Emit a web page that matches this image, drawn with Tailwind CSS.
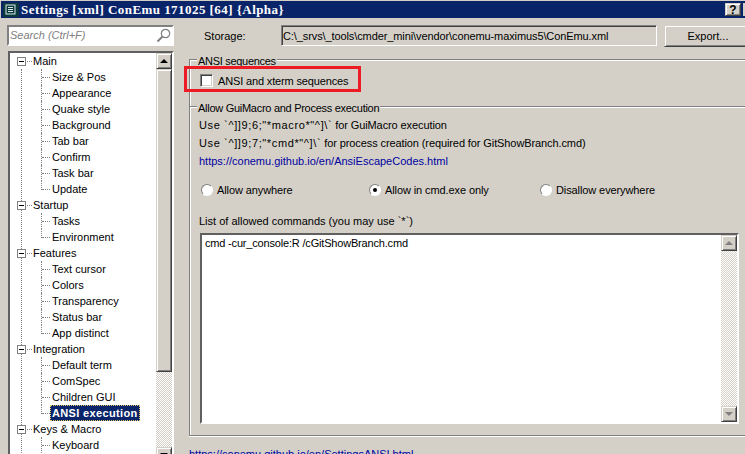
<!DOCTYPE html>
<html lang="en">
  <head>
    <meta charset="UTF-8" />
    <script src="https://cdn.jsdelivr.net/npm/@tailwindcss/browser@4"></script>
    <title>Settings</title>
  </head>
  <body class="h-[454px] w-[745px] overflow-hidden bg-[#d4d0c8] text-[11px] leading-none text-black font-['Liberation_Sans',sans-serif]">
    <!-- Title bar -->
    <div class="pl-px pt-px">
      <div class="flex h-[17px] items-center bg-[#0a246a] pl-[2px] text-white">
        <svg class="h-[14px] w-[16px] shrink-0" viewBox="0 0 16 14">
          <rect width="16" height="14" fill="#0c3a3e" />
          <rect x="3" y="2" width="9" height="9" fill="none" stroke="#d8e8e8" />
          <path d="M5 4.5h5M5 6.5h5M5 8.5h5" stroke="#d8e8e8" />
        </svg>
        <span class="ml-[2px] whitespace-nowrap font-['Liberation_Serif',serif] text-[13px] font-bold tracking-[0.45px]">Settings [xml] ConEmu 171025 [64] {Alpha}</span>
        <div class="ml-auto flex">
          <div class="flex h-[13px] w-[16px] items-center justify-center border border-[#d4d0c8] border-r-[#404040] border-b-[#404040] bg-[#d4d0c8] text-[12px] font-bold text-black shadow-[inset_1px_1px_0_#fff,inset_-1px_-1px_0_#808080]">?</div>
          <div class="ml-[2px] h-[13px] w-[2px] bg-[#d4d0c8]"></div>
        </div>
      </div>
    </div>

    <div class="flex">
      <!-- Left column -->
      <div class="w-[175px] shrink-0 pt-[7px]">
        <div class="ml-[7px] flex h-[21px] w-[167px] items-center border-2 border-[#808080] border-r-white border-b-white bg-white pl-px text-[#808080] italic">
          Search (Ctrl+F)
          <svg class="mr-px ml-auto h-[15px] w-[15px]" viewBox="0 0 15 15" fill="none" stroke="#808080">
            <circle cx="9.5" cy="5.5" r="4.2" stroke-width="1.2" />
            <path d="M6.5 8.5 1.5 13.5" stroke-width="2" />
          </svg>
        </div>

        <!-- Tree -->
        <div class="relative mt-[5px] ml-[8px] flex w-[166px] border-2 border-[#606060] border-r-white border-b-white bg-white">
          <div class="absolute top-[16px] bottom-0 left-[11px] border-l border-dotted border-[#808080]"></div>
          <div class="relative w-[147px]">
            <div class="flex h-4 items-center pl-[7px]"><span class="z-10 h-[9px] w-[9px] border border-[#808080] bg-white bg-[linear-gradient(#000,#000)] bg-[length:5px_1px] bg-center bg-no-repeat"></span><span class="ml-px w-[5px] border-t border-dotted border-[#808080]"></span><span class="ml-px">Main</span></div>
            <div class="flex h-4 items-center pl-[31px]"><span class="h-full w-[9px] border-l border-dotted border-[#808080] pt-2"><span class="block border-t border-dotted border-[#808080]"></span></span><span class="px-[2px]">Size &amp; Pos</span></div>
            <div class="flex h-4 items-center pl-[31px]"><span class="h-full w-[9px] border-l border-dotted border-[#808080] pt-2"><span class="block border-t border-dotted border-[#808080]"></span></span><span class="px-[2px]">Appearance</span></div>
            <div class="flex h-4 items-center pl-[31px]"><span class="h-full w-[9px] border-l border-dotted border-[#808080] pt-2"><span class="block border-t border-dotted border-[#808080]"></span></span><span class="px-[2px]">Quake style</span></div>
            <div class="flex h-4 items-center pl-[31px]"><span class="h-full w-[9px] border-l border-dotted border-[#808080] pt-2"><span class="block border-t border-dotted border-[#808080]"></span></span><span class="px-[2px]">Background</span></div>
            <div class="flex h-4 items-center pl-[31px]"><span class="h-full w-[9px] border-l border-dotted border-[#808080] pt-2"><span class="block border-t border-dotted border-[#808080]"></span></span><span class="px-[2px]">Tab bar</span></div>
            <div class="flex h-4 items-center pl-[31px]"><span class="h-full w-[9px] border-l border-dotted border-[#808080] pt-2"><span class="block border-t border-dotted border-[#808080]"></span></span><span class="px-[2px]">Confirm</span></div>
            <div class="flex h-4 items-center pl-[31px]"><span class="h-full w-[9px] border-l border-dotted border-[#808080] pt-2"><span class="block border-t border-dotted border-[#808080]"></span></span><span class="px-[2px]">Task bar</span></div>
            <div class="flex h-4 items-center pl-[31px]"><span class="h-[9px] w-[9px] self-start border-l border-dotted border-[#808080] pt-2"><span class="block border-t border-dotted border-[#808080]"></span></span><span class="px-[2px]">Update</span></div>

            <div class="flex h-4 items-center pl-[7px]"><span class="z-10 h-[9px] w-[9px] border border-[#808080] bg-white bg-[linear-gradient(#000,#000)] bg-[length:5px_1px] bg-center bg-no-repeat"></span><span class="ml-px w-[5px] border-t border-dotted border-[#808080]"></span><span class="ml-px">Startup</span></div>
            <div class="flex h-4 items-center pl-[31px]"><span class="h-full w-[9px] border-l border-dotted border-[#808080] pt-2"><span class="block border-t border-dotted border-[#808080]"></span></span><span class="px-[2px]">Tasks</span></div>
            <div class="flex h-4 items-center pl-[31px]"><span class="h-[9px] w-[9px] self-start border-l border-dotted border-[#808080] pt-2"><span class="block border-t border-dotted border-[#808080]"></span></span><span class="px-[2px]">Environment</span></div>

            <div class="flex h-4 items-center pl-[7px]"><span class="z-10 h-[9px] w-[9px] border border-[#808080] bg-white bg-[linear-gradient(#000,#000)] bg-[length:5px_1px] bg-center bg-no-repeat"></span><span class="ml-px w-[5px] border-t border-dotted border-[#808080]"></span><span class="ml-px">Features</span></div>
            <div class="flex h-4 items-center pl-[31px]"><span class="h-full w-[9px] border-l border-dotted border-[#808080] pt-2"><span class="block border-t border-dotted border-[#808080]"></span></span><span class="px-[2px]">Text cursor</span></div>
            <div class="flex h-4 items-center pl-[31px]"><span class="h-full w-[9px] border-l border-dotted border-[#808080] pt-2"><span class="block border-t border-dotted border-[#808080]"></span></span><span class="px-[2px]">Colors</span></div>
            <div class="flex h-4 items-center pl-[31px]"><span class="h-full w-[9px] border-l border-dotted border-[#808080] pt-2"><span class="block border-t border-dotted border-[#808080]"></span></span><span class="px-[2px]">Transparency</span></div>
            <div class="flex h-4 items-center pl-[31px]"><span class="h-full w-[9px] border-l border-dotted border-[#808080] pt-2"><span class="block border-t border-dotted border-[#808080]"></span></span><span class="px-[2px]">Status bar</span></div>
            <div class="flex h-4 items-center pl-[31px]"><span class="h-[9px] w-[9px] self-start border-l border-dotted border-[#808080] pt-2"><span class="block border-t border-dotted border-[#808080]"></span></span><span class="px-[2px]">App distinct</span></div>

            <div class="flex h-4 items-center pl-[7px]"><span class="z-10 h-[9px] w-[9px] border border-[#808080] bg-white bg-[linear-gradient(#000,#000)] bg-[length:5px_1px] bg-center bg-no-repeat"></span><span class="ml-px w-[5px] border-t border-dotted border-[#808080]"></span><span class="ml-px">Integration</span></div>
            <div class="flex h-4 items-center pl-[31px]"><span class="h-full w-[9px] border-l border-dotted border-[#808080] pt-2"><span class="block border-t border-dotted border-[#808080]"></span></span><span class="px-[2px]">Default term</span></div>
            <div class="flex h-4 items-center pl-[31px]"><span class="h-full w-[9px] border-l border-dotted border-[#808080] pt-2"><span class="block border-t border-dotted border-[#808080]"></span></span><span class="px-[2px]">ComSpec</span></div>
            <div class="flex h-4 items-center pl-[31px]"><span class="h-full w-[9px] border-l border-dotted border-[#808080] pt-2"><span class="block border-t border-dotted border-[#808080]"></span></span><span class="px-[2px]">Children GUI</span></div>
            <div class="flex h-4 items-center pl-[31px]"><span class="h-[9px] w-[9px] self-start border-l border-dotted border-[#808080] pt-2"><span class="block border-t border-dotted border-[#808080]"></span></span><span class="flex h-4 items-center border border-dotted border-[#e8c860] bg-[#0a246a] px-px font-bold tracking-[0.35px] text-white">ANSI execution</span></div>

            <div class="flex h-4 items-center pl-[7px]"><span class="z-10 h-[9px] w-[9px] border border-[#808080] bg-white bg-[linear-gradient(#000,#000)] bg-[length:5px_1px] bg-center bg-no-repeat"></span><span class="ml-px w-[5px] border-t border-dotted border-[#808080]"></span><span class="ml-px">Keys &amp; Macro</span></div>
            <div class="flex h-4 items-center pl-[31px]"><span class="h-full w-[9px] border-l border-dotted border-[#808080] pt-2"><span class="block border-t border-dotted border-[#808080]"></span></span><span class="px-[2px]">Keyboard</span></div>
          </div>

          <!-- Tree scrollbar -->
          <div class="flex h-[410px] w-[16px] flex-col">
            <div class="flex h-4 items-center justify-center border border-[#d4d0c8] border-r-[#404040] border-b-[#404040] bg-[#d4d0c8] shadow-[inset_1px_1px_0_#fff,inset_-1px_-1px_0_#808080]"><span class="border-x-[4px] border-b-[4px] border-x-transparent border-b-black"></span></div>
            <div class="h-[303px] border border-[#d4d0c8] border-r-[#404040] border-b-[#404040] bg-[#d4d0c8] shadow-[inset_1px_1px_0_#fff,inset_-1px_-1px_0_#808080]"></div>
            <div class="h-[75px] bg-[repeating-conic-gradient(#d4d0c8_0_25%,#fff_0_50%)] bg-[length:2px_2px]"></div>
            <div class="flex h-4 items-center justify-center border border-[#d4d0c8] border-r-[#404040] border-b-[#404040] bg-[#d4d0c8] shadow-[inset_1px_1px_0_#fff,inset_-1px_-1px_0_#808080]"><span class="border-x-[4px] border-t-[4px] border-x-transparent border-t-black"></span></div>
          </div>
        </div>
      </div>

      <!-- Right column -->
      <div class="relative w-[570px] shrink-0 pt-[7px]">
        <!-- Storage row -->
        <div class="flex h-[21px] items-center pl-[29px]">
          <span class="mt-[2px] w-[77px] shrink-0">Storage:</span>
          <div class="flex h-[21px] w-[376px] shrink-0 items-center border border-[#808080] border-r-white border-b-white pt-[2px] pl-px tracking-[-0.1px] whitespace-nowrap shadow-[inset_1px_1px_0_#404040]">C:\_srvs\_tools\cmder_mini\vendor\conemu-maximus5\ConEmu.xml</div>
          <div class="ml-[7px] flex h-[22px] w-[88px] shrink-0 items-center justify-center border border-[#d4d0c8] border-r-[#404040] border-b-[#404040] pt-[2px] shadow-[inset_1px_1px_0_#fff,inset_-1px_-1px_0_#808080]">Export...</div>
        </div>

        <!-- ANSI sequences -->
        <div class="relative mt-[13px] ml-[14px] h-[47px] w-[600px] border-t border-l border-[#808080] pt-[14px] pl-[10px] shadow-[inset_1px_1px_0_#fff]">
          <span class="absolute -top-[4px] left-[7px] bg-[#d4d0c8] px-px tracking-[-0.3px]">ANSI sequences</span>
          <label class="flex h-[13px] items-center">
            <span class="h-[13px] w-[13px] border border-[#808080] border-r-white border-b-white bg-white shadow-[inset_1px_1px_0_#404040,inset_-1px_-1px_0_#d4d0c8]"></span>
            <span class="mt-[2px] ml-[5px] tracking-[-0.15px]">ANSI and xterm sequences</span>
          </label>
        </div>

        <!-- Allow GuiMacro -->
        <div class="relative ml-[14px] h-[330px] w-[600px] border-t border-b border-l border-[#808080] pt-2 pl-[9px] shadow-[inset_1px_1px_0_#fff,0_1px_0_#fff]">
          <span class="absolute -top-[4px] left-[7px] bg-[#d4d0c8] px-px tracking-[-0.28px]">Allow GuiMacro and Process execution</span>
          <div class="flex h-[18px] items-center pt-[2px] whitespace-pre tracking-[-0.1px]"><span class="tracking-[0.62px]">Use `^]]9;6;"*macro*"^]\`</span> for GuiMacro execution</div>
          <div class="flex h-[18px] items-center pt-[2px] whitespace-pre tracking-[-0.1px]"><span class="tracking-[0.62px]">Use `^]]9;7;"*cmd*"^]\`</span> for process creation (required for GitShowBranch.cmd)</div>
          <div class="flex h-[18px] items-center pt-[2px] text-[#0000a0]">https://conemu.github.io/en/AnsiEscapeCodes.html</div>

          <div class="mt-[12px] flex h-[18px] items-center pl-[2px] tracking-[-0.1px]">
            <label class="flex w-[168px] items-center"><span class="h-3 w-3 rounded-full border border-[#808080] border-r-white border-b-white bg-white"></span><span class="ml-[4px]">Allow anywhere</span></label>
            <label class="flex w-[171px] items-center"><span class="flex h-3 w-3 items-center justify-center rounded-full border border-[#808080] border-r-white border-b-white bg-white"><span class="h-1 w-1 rounded-full bg-black"></span></span><span class="ml-[4px]">Allow in cmd.exe only</span></label>
            <label class="flex items-center"><span class="h-3 w-3 rounded-full border border-[#808080] border-r-white border-b-white bg-white"></span><span class="ml-[4px]">Disallow everywhere</span></label>
          </div>

          <div class="mt-[13px] flex h-[18px] items-center">List of allowed commands (you may use `*`)</div>

          <!-- Command list -->
          <div class="mt-[3px] ml-px flex h-[191px] w-[539px] border-2 border-[#606060] border-r-white border-b-white bg-white">
            <div class="flex-1 pt-[3px] pl-[3px] tracking-[-0.18px]">cmd -cur_console:R /cGitShowBranch.cmd</div>
            <div class="flex w-[16px] flex-col bg-[repeating-conic-gradient(#d4d0c8_0_25%,#fff_0_50%)] bg-[length:2px_2px]">
              <div class="flex h-4 items-center justify-center border border-[#d4d0c8] border-r-[#404040] border-b-[#404040] bg-[#d4d0c8] shadow-[inset_1px_1px_0_#fff,inset_-1px_-1px_0_#808080]"><span class="border-x-[4px] border-b-[4px] border-x-transparent border-b-[#808080]"></span></div>
              <div class="mt-auto flex h-4 items-center justify-center border border-[#d4d0c8] border-r-[#404040] border-b-[#404040] bg-[#d4d0c8] shadow-[inset_1px_1px_0_#fff,inset_-1px_-1px_0_#808080]"><span class="border-x-[4px] border-t-[4px] border-x-transparent border-t-[#808080]"></span></div>
            </div>
          </div>
        </div>

        <div class="mt-[13px] ml-[14px] whitespace-nowrap text-[#0000a0]">https://conemu.github.io/en/SettingsANSI.html</div>

        <!-- Red annotation box -->
        <div class="absolute top-[48px] left-[9px] h-[26px] w-[177px] border-[3px] border-[#ed1c24]"></div>
      </div>
    </div>
  </body>
</html>
